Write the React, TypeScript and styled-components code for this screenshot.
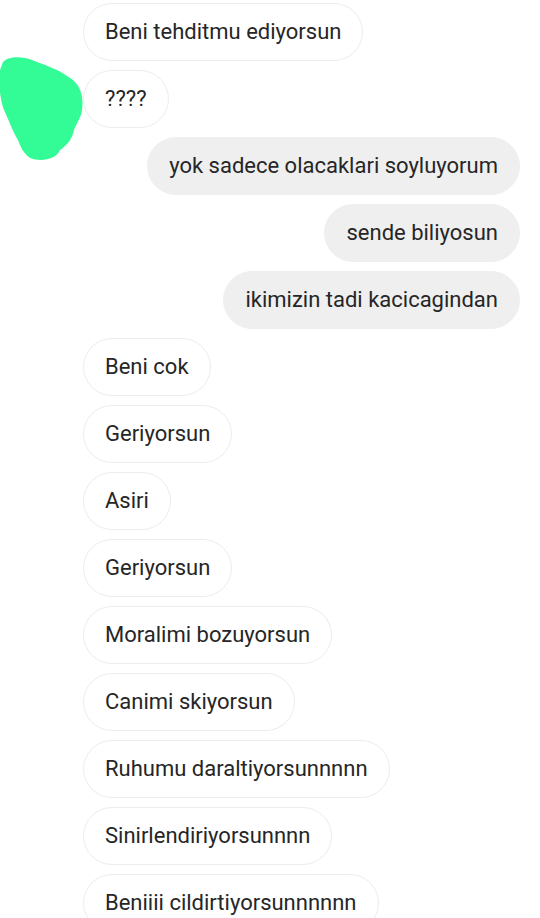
import React from "react";
import styled, { createGlobalStyle } from "styled-components";

const Global = createGlobalStyle`
  html, body { margin: 0; padding: 0; background: #ffffff; }
  body { width: 540px; height: 918px; overflow: hidden; }
`;

const Screen = styled.div`
  position: relative;
  width: 540px;
  height: 918px;
  overflow: hidden;
  background: #ffffff;
`;

const Thread = styled.div`
  display: flex;
  flex-direction: column;
  gap: 9px;
  padding: 3px 20px 0 83px;
`;

const Row = styled.div<{ $mine?: boolean }>`
  display: flex;
  justify-content: ${(p) => (p.$mine ? "flex-end" : "flex-start")};
`;

const Bubble = styled.div<{ $mine?: boolean }>`
  box-sizing: border-box;
  height: 58px;
  padding: 0 21px;
  display: flex;
  align-items: center;
  border-radius: 29px;
  font-family: Roboto, "Noto Sans", sans-serif;
  font-size: 22px;
  line-height: 26px;
  color: #262626;
  white-space: nowrap;
  background: ${(p) => (p.$mine ? "#efefef" : "#ffffff")};
  border: 1px solid ${(p) => (p.$mine ? "#efefef" : "#ececec")};
`;

const Scribble = styled.svg`
  position: absolute;
  left: 0;
  top: 0;
  width: 100px;
  height: 170px;
`;

const messages: { text: string; mine?: boolean }[] = [
  { text: "Beni tehditmu ediyorsun" },
  { text: "????" },
  { text: "yok sadece olacaklari soyluyorum", mine: true },
  { text: "sende biliyosun", mine: true },
  { text: "ikimizin tadi kacicagindan", mine: true },
  { text: "Beni cok" },
  { text: "Geriyorsun" },
  { text: "Asiri" },
  { text: "Geriyorsun" },
  { text: "Moralimi bozuyorsun" },
  { text: "Canimi skiyorsun" },
  { text: "Ruhumu daraltiyorsunnnnn" },
  { text: "Sinirlendiriyorsunnnn" },
  { text: "Beniiii cildirtiyorsunnnnnn" },
];

export default function App() {
  return (
    <Screen>
      <Global />
      <Thread>
        {messages.map((m, i) => (
          <Row key={i} $mine={m.mine}>
            <Bubble $mine={m.mine}>{m.text}</Bubble>
          </Row>
        ))}
      </Thread>
      <Scribble viewBox="0 0 100 170">
        <path
          d="M 3 62 C 8 56, 22 56, 32 60 C 45 65, 60 70, 70 78 C 80 84, 84 96, 82 110 C 81 118, 76 124, 74 130 C 72 140, 66 146, 60 150 C 56 160, 40 162, 30 158 C 22 152, 20 145, 18 140 C 12 130, 8 118, 4 110 C 0 100, -2 80, 0 70 Z"
          fill="#33fb95"
        />
      </Scribble>
    </Screen>
  );
}
